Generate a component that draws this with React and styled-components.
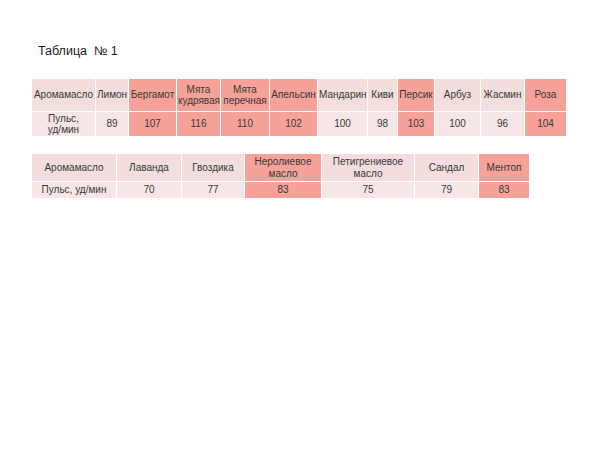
import React from 'react';
import styled, { createGlobalStyle } from 'styled-components';

const GlobalStyle = createGlobalStyle`
  html, body {
    margin: 0;
    padding: 0;
    background: #fff;
  }
  body {
    font-family: "Liberation Sans", Arial, sans-serif;
    color: #3a3a3a;
  }
`;

const Slide = styled.div`
  width: 600px;
  height: 450px;
  box-sizing: border-box;
  padding: 43px 0 0 31px;
  display: flex;
  flex-direction: column;
  align-items: flex-start;
`;

const Title = styled.h1`
  margin: 0 0 19px 7px;
  font-size: 12.5px;
  font-weight: normal;
  line-height: 16px;
  color: #1a1a1a;
  white-space: pre;
`;

const Table = styled.table`
  border-collapse: collapse;
  table-layout: fixed;
  width: ${({ $width }) => $width}px;
  margin-bottom: ${({ $gap }) => $gap || 0}px;
`;

const Row = styled.tr`
  height: ${({ $h }) => $h}px;
`;

const Cell = styled.td`
  padding: 0 1px;
  border: 1px solid #fff;
  text-align: center;
  vertical-align: middle;
  font-size: 10px;
  line-height: 11.5px;
  color: #383838;
  overflow: hidden;
  white-space: pre-line;
  background: ${({ $hot, $head }) =>
    $hot ? '#f6a298' : $head ? '#f3dedd' : '#f6e7e6'};
`;

const table1 = {
  widths: [64, 33, 48, 44, 49, 48, 50, 30, 37, 46, 44, 42],
  names: ['Аромамасло', 'Лимон', 'Бергамот', 'Мята кудрявая', 'Мята перечная', 'Апельсин', 'Мандарин', 'Киви', 'Персик', 'Арбуз', 'Жасмин', 'Роза'],
  values: ['Пульс,\nуд/мин', '89', '107', '116', '110', '102', '100', '98', '103', '100', '96', '104'],
  hot: [2, 3, 4, 5, 8, 11],
  heights: [33, 25],
};

const table2 = {
  widths: [85, 65, 63, 77, 93, 64, 51],
  names: ['Аромамасло', 'Лаванда', 'Гвоздика', 'Неролиевое масло', 'Петигрениевое масло', 'Сандал', 'Ментоп'],
  values: ['Пульс, уд/мин', '70', '77', '83', '75', '79', '83'],
  hot: [3, 6],
  heights: [28, 17],
};

const DataTable = ({ data, gap }) => {
  const total = data.widths.reduce((a, b) => a + b, 0);
  return (
    <Table $width={total} $gap={gap}>
      <colgroup>
        {data.widths.map((w, i) => (
          <col key={i} style={{ width: w }} />
        ))}
      </colgroup>
      <tbody>
        <Row $h={data.heights[0]}>
          {data.names.map((n, i) => (
            <Cell key={n} $head $hot={data.hot.includes(i)}>{n}</Cell>
          ))}
        </Row>
        <Row $h={data.heights[1]}>
          {data.values.map((v, i) => (
            <Cell key={i} $hot={data.hot.includes(i)}>{v}</Cell>
          ))}
        </Row>
      </tbody>
    </Table>
  );
};

export default function App() {
  return (
    <>
      <GlobalStyle />
      <Slide>
        <Title>Таблица  № 1</Title>
        <DataTable data={table1} gap={16} />
        <DataTable data={table2} />
      </Slide>
    </>
  );
}
